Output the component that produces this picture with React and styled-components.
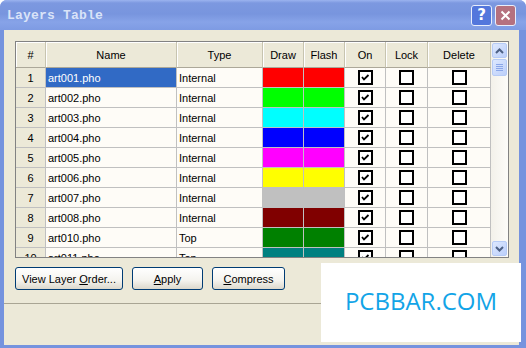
import React from "react";
import styled, { createGlobalStyle } from "styled-components";

const GlobalStyle = createGlobalStyle`
  body {
    margin: 0;
    background: #fff;
    font-family: "Liberation Sans", Arial, sans-serif;
  }
`;

const Window = styled.div`
  position: relative;
  width: 526px;
  height: 348px;
  display: flex;
  flex-direction: column;
  background: #7593de;
  border-radius: 7px 7px 0 0;
  overflow: hidden;
`;

const TitleBar = styled.div`
  height: 30px;
  display: flex;
  align-items: center;
  padding: 0 10px 0 7px;
  background: linear-gradient(#9bb3ef 0, #7c98e0 3px, #7895de 14px, #87a3e8 22px, #7e9be3 30px);
`;

const Title = styled.div`
  font-family: "Liberation Mono", monospace;
  font-weight: bold;
  font-size: 13px;
  color: #d9e3f8;
  letter-spacing: 0.2px;
`;

const TitleButtons = styled.div`
  margin-left: auto;
  display: flex;
  gap: 3px;
`;

const CapButton = styled.div`
  width: 19px;
  height: 19px;
  border: 1px solid #e8eefc;
  border-radius: 3px;
  display: flex;
  align-items: center;
  justify-content: center;
  background: ${(p) => (p.$close ? "#b5717f" : "#5377dc")};
  color: #fff;
  font-family: "DejaVu Sans", sans-serif;
  font-weight: bold;
  font-size: 15px;
`;

const Client = styled.div`
  flex: 1;
  margin: 0 7px 3px 4px;
  background: #ece9d8;
  display: flex;
  flex-direction: column;
`;

const Body = styled.div`
  padding: 11px 0 0 11px;
`;

const Frame = styled.div`
  width: 494px;
  height: 217px;
  box-sizing: border-box;
  border: 1px solid #828282;
  display: flex;
`;

const Grid = styled.div`
  width: 475px;
  height: 215px;
  overflow: hidden;
  display: grid;
  grid-template-columns: 30px 131px 86px 41px 41px 41px 42px 63px;
  grid-template-rows: 26px;
  grid-auto-rows: 20px;
  background: #fefcf7;
  font-size: 11px;
  color: #000;
`;

const HeadCell = styled.div`
  box-sizing: border-box;
  background: #ece9d8;
  border-right: 1px solid #c7c4b0;
  border-bottom: 1px solid #aca899;
  box-shadow: inset 1px 0 #fff, inset 0 1px #fff;
  display: flex;
  align-items: center;
  justify-content: center;
`;

const RowHead = styled.div`
  box-sizing: border-box;
  background: #ece9d8;
  border-right: 1px solid #c0c0c0;
  border-bottom: 1px solid #c0c0c0;
  display: flex;
  align-items: center;
  justify-content: center;
`;

const Cell = styled.div`
  box-sizing: border-box;
  border-right: 1px solid #c0c0c0;
  border-bottom: 1px solid #c0c0c0;
  display: flex;
  align-items: center;
  justify-content: ${(p) => (p.$center ? "center" : "flex-start")};
  padding-left: ${(p) => (p.$center ? 0 : 2)}px;
  background: ${(p) => p.$bg || "transparent"};
  color: ${(p) => (p.$selected ? "#fff" : "#000")};
  white-space: nowrap;
  overflow: hidden;
`;

const Box = styled.div`
  width: 15px;
  height: 15px;
  box-sizing: border-box;
  border: 2px solid #000;
  background: #fff;
  display: flex;
  align-items: center;
  justify-content: center;
`;

const ScrollBar = styled.div`
  width: 17px;
  height: 215px;
  display: flex;
  flex-direction: column;
  background: linear-gradient(90deg, #f3f1ea, #fdfcf9);
`;

const ScrollBtn = styled.div`
  width: 15px;
  height: 15px;
  margin: 1px;
  box-sizing: border-box;
  border: 1px solid #b6cbf6;
  border-radius: 2px;
  background: linear-gradient(135deg, #dde8fe, #bccffa);
  display: flex;
  align-items: center;
  justify-content: center;
`;

const Thumb = styled(ScrollBtn)`
  height: 17px;
  margin-top: 0;
`;

const Track = styled.div`
  flex: 1;
`;

const ButtonRow = styled.div`
  display: flex;
  gap: 9px;
  margin-top: 9px;
`;

const XPButton = styled.div`
  width: ${(p) => p.$w}px;
  height: 23px;
  box-sizing: border-box;
  border: 1px solid #003c74;
  border-radius: 3px;
  background: linear-gradient(#ffffff, #f4f3ee 60%, #dcd8cc);
  display: flex;
  align-items: center;
  justify-content: center;
  font-size: 11px;
  color: #000;
  white-space: pre;
`;

const Separator = styled.div`
  margin-top: 13px;
  border-top: 1px solid #a9a594;
`;

const Watermark = styled.div`
  position: absolute;
  left: 321px;
  top: 263px;
  width: 200px;
  height: 79px;
  background: #fff;
  display: flex;
  align-items: center;
  justify-content: center;
  padding-bottom: 5px;
  box-sizing: border-box;
  font-family: "Open Sans", sans-serif;
  font-size: 24px;
  color: #12a4e7;
`;

const rows = [
  ["1", "art001.pho", "Internal", "#ff0000"],
  ["2", "art002.pho", "Internal", "#00ff00"],
  ["3", "art003.pho", "Internal", "#00ffff"],
  ["4", "art004.pho", "Internal", "#0000ff"],
  ["5", "art005.pho", "Internal", "#ff00ff"],
  ["6", "art006.pho", "Internal", "#ffff00"],
  ["7", "art007.pho", "Internal", "#c0c0c0"],
  ["8", "art008.pho", "Internal", "#800000"],
  ["9", "art010.pho", "Top", "#008000"],
  ["10", "art011.pho", "Top", "#008080"],
];

const Check = () => (
  <svg width="9" height="9" viewBox="0 0 9 9">
    <path d="M1 4 L3 6.5 L7.5 2" fill="none" stroke="#000" strokeWidth="1.8" />
  </svg>
);

const Chevron = ({ up }) => (
  <svg width="9" height="6" viewBox="0 0 9 6">
    <path d={up ? "M1 5 L4.5 1.5 L8 5" : "M1 1 L4.5 4.5 L8 1"} fill="none" stroke="#4d6185" strokeWidth="2" />
  </svg>
);

const Grip = () => (
  <svg width="7" height="8" viewBox="0 0 7 8">
    {[0.5, 2.5, 4.5, 6.5].map((y) => (
      <line key={y} x1="0" x2="7" y1={y} y2={y} stroke="#8aa6e8" />
    ))}
  </svg>
);

export default function App() {
  return (
    <Window>
      <GlobalStyle />
      <TitleBar>
        <Title>Layers Table</Title>
        <TitleButtons>
          <CapButton>?</CapButton>
          <CapButton $close>
            <svg width="11" height="11" viewBox="0 0 11 11">
              <path d="M1.5 1.5 L9.5 9.5 M9.5 1.5 L1.5 9.5" stroke="#fff" strokeWidth="2" />
            </svg>
          </CapButton>
        </TitleButtons>
      </TitleBar>
      <Client>
        <Body>
          <Frame>
            <Grid>
              <HeadCell>#</HeadCell>
              <HeadCell>Name</HeadCell>
              <HeadCell>Type</HeadCell>
              <HeadCell>Draw</HeadCell>
              <HeadCell>Flash</HeadCell>
              <HeadCell>On</HeadCell>
              <HeadCell>Lock</HeadCell>
              <HeadCell>Delete</HeadCell>
              {rows.map(([n, name, type, color], i) => (
                <React.Fragment key={n}>
                  <RowHead>{n}</RowHead>
                  <Cell $bg={i === 0 ? "#316ac5" : undefined} $selected={i === 0}>
                    {name}
                  </Cell>
                  <Cell>{type}</Cell>
                  <Cell $bg={color} />
                  <Cell $bg={color} />
                  <Cell $center>
                    <Box>
                      <Check />
                    </Box>
                  </Cell>
                  <Cell $center>
                    <Box />
                  </Cell>
                  <Cell $center>
                    <Box />
                  </Cell>
                </React.Fragment>
              ))}
            </Grid>
            <ScrollBar>
              <ScrollBtn>
                <Chevron up />
              </ScrollBtn>
              <Thumb>
                <Grip />
              </Thumb>
              <Track />
              <ScrollBtn>
                <Chevron />
              </ScrollBtn>
            </ScrollBar>
          </Frame>
          <ButtonRow>
            <XPButton $w={108}>
              <span>
                View Layer <u>O</u>rder...
              </span>
            </XPButton>
            <XPButton $w={71}>
              <span>
                <u>A</u>pply
              </span>
            </XPButton>
            <XPButton $w={73}>
              <span>
                <u>C</u>ompress
              </span>
            </XPButton>
          </ButtonRow>
        </Body>
        <Separator />
      </Client>
      <Watermark>PCBBAR.COM</Watermark>
    </Window>
  );
}
